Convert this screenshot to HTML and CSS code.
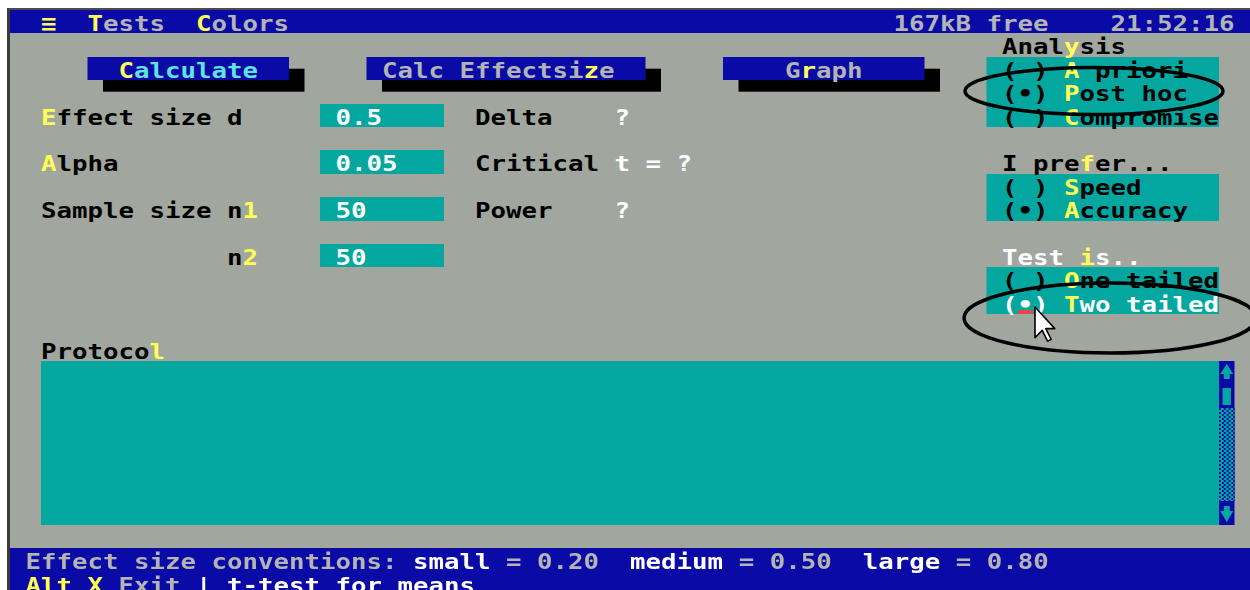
FILE: index.html
```html
<!DOCTYPE html>
<html lang="en">
<head>
<meta charset="utf-8">
<title>GPOWER – t-test for means</title>
<link rel="stylesheet" href="styles.css">
</head>
<body>
<div class="monitor">
  <div class="screen">
    <header class="menubar">
      <nav class="menu">
        <span class="hot">≡</span>
        <span><span class="hot">T</span>ests</span>
        <span><span class="hot">C</span>olors</span>
      </nav>
      <div class="sysinfo">
        <span>167kB free</span>
        <span>21:52:16</span>
      </div>
    </header>

    <main class="workspace">
      <section class="panel-left">
        <div class="actions">
          <div class="btn btn-calc"><span class="hot">C</span><span class="cyan">alculate</span></div>
          <div class="btn btn-effect">Calc Effectsi<span class="hot">z</span>e</div>
          <div class="btn btn-graph">G<span class="hot">r</span>aph</div>
        </div>

        <div class="params">
          <div class="param">
            <span class="plabel"><span class="hot">E</span>ffect size d</span>
            <span class="field">0.5</span>
            <span class="rlabel">Delta</span>
            <span class="rvalue">?</span>
          </div>
          <div class="param">
            <span class="plabel"><span class="hot">A</span>lpha</span>
            <span class="field">0.05</span>
            <span class="rlabel">Critical</span>
            <span class="rvalue">t = ?</span>
          </div>
          <div class="param">
            <span class="plabel">Sample size n<span class="hot">1</span></span>
            <span class="field">50</span>
            <span class="rlabel">Power</span>
            <span class="rvalue">?</span>
          </div>
          <div class="param">
            <span class="plabel plabel-sub">n<span class="hot">2</span></span>
            <span class="field">50</span>
          </div>
        </div>
      </section>

      <section class="panel-right">
        <div class="group">
          <div class="gtitle">Anal<span class="hot">y</span>sis</div>
          <div class="options">
            <div class="opt">( ) <span class="hot">A</span> priori</div>
            <div class="opt">(•) <span class="hot">P</span>ost hoc</div>
            <div class="opt">( ) <span class="hot">C</span>ompromise</div>
          </div>
        </div>
        <div class="group">
          <div class="gtitle">I pre<span class="hot">f</span>er...</div>
          <div class="options">
            <div class="opt">( ) <span class="hot">S</span>peed</div>
            <div class="opt">(•) <span class="hot">A</span>ccuracy</div>
          </div>
        </div>
        <div class="group group-focus">
          <div class="gtitle">Test <span class="hot">i</span>s..</div>
          <div class="options">
            <div class="opt">( ) <span class="hot">O</span>ne tailed</div>
            <div class="opt opt-focus">(<span class="caret">•</span>) <span class="hot">T</span>wo tailed</div>
          </div>
        </div>
      </section>
    </main>

    <section class="protocol">
      <div class="protocol-label">Protoco<span class="hot">l</span></div>
      <div class="protocol-body">
        <div class="log"></div>
        <div class="scrollbar">
          <div class="sb-cell">
            <svg class="sb-arrow" viewBox="0 0 13 23.4" preserveAspectRatio="none"><path d="M6.5 3 L12 13 L9 13 L9 18 L4 18 L4 13 L1 13 Z"/></svg>
          </div>
          <div class="sb-cell sb-thumb"><span class="thumb"></span></div>
          <div class="sb-track"></div>
          <div class="sb-cell">
            <svg class="sb-arrow" viewBox="0 0 13 23.4" preserveAspectRatio="none"><path d="M4 5 L9 5 L9 10 L12 10 L6.5 21 L1 10 L4 10 Z"/></svg>
          </div>
        </div>
      </div>
    </section>

    <footer class="statusbar">
      <div class="status-line"><span class="dim">Effect size conventions:</span> <span class="bright">small</span> <span class="dim">= 0.20</span>  <span class="bright">medium</span> <span class="dim">= 0.50</span>  <span class="bright">large</span> <span class="dim">= 0.80</span></div>
      <div class="status-line"><span class="hot">Alt X</span> <span class="dim">Exit</span> <span class="bright">| t-test for means</span></div>
    </footer>
  </div>
</div>

<svg class="marks" width="1250" height="590" viewBox="0 0 1250 590">
  <ellipse cx="1094" cy="91" rx="129" ry="23.5" fill="none" stroke="#000" stroke-width="3.5"/>
  <ellipse cx="1110" cy="318" rx="146" ry="35" fill="none" stroke="#000" stroke-width="3.5"/>
  <path d="M1035 307 L1035 337.6 L1042.2 330.4 L1047.6 341.2 L1051.2 339.4 L1045.8 328.6 L1054.8 328.6 Z" fill="#fff" stroke="#000" stroke-width="1.6" stroke-linejoin="round"/>
</svg>
</body>
</html>
```

FILE: styles.css
```css
:root {
  --cw: 13px;          /* one text-mode column (before horizontal stretch) */
  --rh: 23.4px;        /* one text-mode row */
  --blue: #0a0aa6;
  --grey: #a1a69f;
  --teal: #03a79f;
  --yellow: #ffff55;
  --dim: #b4b4b4;
  --cyan: #5fe3e3;
  --white: #ffffff;
  --ink: #000000;
  --caret: #e34848;
}

* {
  box-sizing: border-box;
}

html,
body {
  margin: 0;
  height: 100%;
}

body {
  position: relative;
  overflow: hidden;
  background: #ffffff;
}

/* CRT frame */
.monitor {
  margin: 8px 0 0 7px;
  height: 582px;
  border-top: 2px solid #4c4c4c;
  border-left: 3px solid #3a3a3a;
  background: var(--grey);
  overflow: hidden;
}

.screen {
  width: calc(var(--cw) * 80);
  display: flex;
  flex-direction: column;
  transform: scaleX(1.19231);
  transform-origin: 0 0;
  background: var(--grey);
  color: var(--ink);
  font-family: "DejaVu Sans Mono", "Liberation Mono", monospace;
  font-weight: 700;
  font-size: 21.6px;
  line-height: 27.6px;
}

.hot {
  color: var(--yellow);
}

.cyan {
  color: var(--cyan);
}

.dim {
  color: var(--dim);
}

.bright {
  color: var(--white);
}

/* Menu bar */
.menubar {
  height: var(--rh);
  flex: 0 0 auto;
  display: flex;
  justify-content: space-between;
  background: var(--blue);
  color: var(--dim);
}

.menu {
  display: flex;
  gap: calc(var(--cw) * 2);
  padding-left: calc(var(--cw) * 2);
}

.sysinfo {
  display: flex;
  gap: calc(var(--cw) * 4);
  padding-right: var(--cw);
}

/* Upper work area */
.workspace {
  display: flex;
  height: calc(var(--rh) * 13);
  flex: 0 0 auto;
}

.panel-left {
  width: calc(var(--cw) * 63);
  flex: 0 0 auto;
}

.actions {
  display: flex;
  gap: calc(var(--cw) * 5);
  height: var(--rh);
  margin: var(--rh) 0;
  padding-left: calc(var(--cw) * 5);
}

.btn {
  height: var(--rh);
  background: var(--blue);
  color: var(--dim);
  white-space: pre;
  box-shadow: var(--cw) calc(var(--rh) / 2) 0 var(--ink);
}

.btn-calc {
  width: calc(var(--cw) * 13);
  padding-left: calc(var(--cw) * 2);
}

.btn-effect {
  width: calc(var(--cw) * 18);
  padding-left: var(--cw);
}

.btn-graph {
  width: calc(var(--cw) * 13);
  padding-left: calc(var(--cw) * 4);
}

.params {
  display: flex;
  flex-direction: column;
  gap: var(--rh);
  padding-left: calc(var(--cw) * 2);
}

.param {
  display: flex;
  height: var(--rh);
}

.plabel {
  width: calc(var(--cw) * 18);
  flex: 0 0 auto;
  white-space: pre;
}

.plabel-sub {
  padding-left: calc(var(--cw) * 12);
}

.field {
  width: calc(var(--cw) * 8);
  flex: 0 0 auto;
  height: var(--rh);
  padding-left: var(--cw);
  background: var(--teal);
  color: var(--white);
}

.rlabel {
  width: calc(var(--cw) * 9);
  flex: 0 0 auto;
  margin-left: calc(var(--cw) * 2);
}

.rvalue {
  color: var(--white);
  white-space: pre;
}

/* Option groups on the right */
.panel-right {
  width: calc(var(--cw) * 17);
  flex: 0 0 auto;
  display: flex;
  flex-direction: column;
  gap: var(--rh);
}

.gtitle {
  height: var(--rh);
  padding-left: var(--cw);
  white-space: pre;
}

.options {
  width: calc(var(--cw) * 15);
  background: var(--teal);
}

.opt {
  height: var(--rh);
  padding-left: var(--cw);
  white-space: pre;
}

.group-focus .gtitle,
.opt-focus {
  color: var(--white);
}

.caret {
  display: inline-block;
  width: var(--cw);
  height: var(--rh);
  box-shadow: inset 0 -4px 0 var(--caret);
}

/* Protocol window */
.protocol {
  flex: 0 0 auto;
}

.protocol-label {
  height: var(--rh);
  padding-left: calc(var(--cw) * 2);
}

.protocol-body {
  display: flex;
  height: calc(var(--rh) * 7);
  margin-bottom: var(--rh);
  padding-left: calc(var(--cw) * 2);
}

.log {
  width: calc(var(--cw) * 76);
  flex: 0 0 auto;
  background: var(--teal);
}

.scrollbar {
  width: var(--cw);
  flex: 0 0 auto;
  display: flex;
  flex-direction: column;
  background: var(--blue);
}

.sb-cell {
  height: var(--rh);
  flex: 0 0 auto;
}

.sb-arrow {
  display: block;
  width: 100%;
  height: 100%;
  fill: var(--teal);
}

.sb-thumb {
  display: flex;
  align-items: center;
  justify-content: center;
}

.thumb {
  width: 7px;
  height: 17px;
  background: var(--teal);
}

.sb-track {
  flex: 1 1 auto;
  background-color: var(--blue);
  background-image: repeating-conic-gradient(var(--teal) 0 25%, var(--blue) 0 50%);
  background-size: 4px 4px;
}

/* Status lines */
.statusbar {
  flex: 0 0 auto;
  background: var(--blue);
  color: var(--dim);
}

.status-line {
  height: var(--rh);
  padding-left: var(--cw);
  white-space: pre;
}

/* Hand-drawn markings and mouse pointer on top of the screen */
.marks {
  position: absolute;
  top: 0;
  left: 0;
  pointer-events: none;
}
```
